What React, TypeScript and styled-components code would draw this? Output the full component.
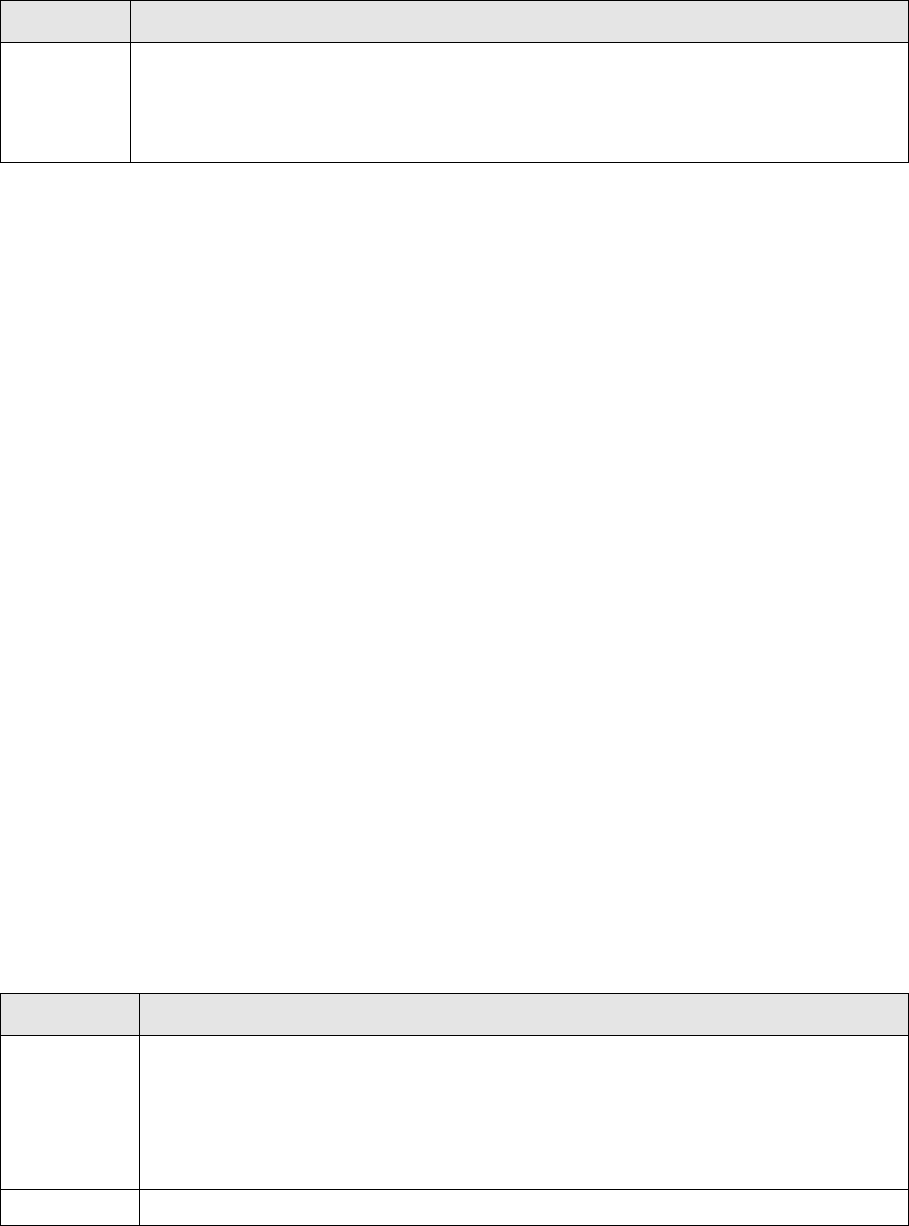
import React from 'react';
import styled, { createGlobalStyle } from 'styled-components';

const GlobalStyle = createGlobalStyle`
  html, body {
    margin: 0;
    padding: 0;
    background: #fff;
    font-family: "Liberation Sans", Arial, sans-serif;
  }
  * { box-sizing: border-box; }
`;

const Page = styled.div`
  width: 909px;
  display: flex;
  flex-direction: column;
`;

const Table = styled.div<{ $first: number; $gapTop?: number }>`
  display: grid;
  grid-template-columns: ${({ $first }) => `${$first}px 1fr`};
  width: 909px;
  border-top: 1px solid #000;
  border-left: 1px solid #000;
  margin-top: ${({ $gapTop }) => ($gapTop ? `${$gapTop}px` : '0')};
`;

const Cell = styled.div<{ $h: number; $head?: boolean }>`
  height: ${({ $h }) => `${$h}px`};
  background: ${({ $head }) => ($head ? '#e5e5e5' : '#fff')};
  border-right: 1px solid #000;
  border-bottom: 1px solid #000;
  font-size: 14px;
  color: #000;
  padding: 8px 10px;
`;

const rowsTop = [42, 120];
const rowsBottom = [42, 154, 36];

export default function App() {
  return (
    <>
      <GlobalStyle />
      <Page>
        <Table $first={130}>
          {rowsTop.map((h, i) => (
            <React.Fragment key={i}>
              <Cell $h={h} $head={i === 0} />
              <Cell $h={h} $head={i === 0} />
            </React.Fragment>
          ))}
        </Table>
        <Table $first={139} $gapTop={830}>
          {rowsBottom.map((h, i) => (
            <React.Fragment key={i}>
              <Cell $h={h} $head={i === 0} />
              <Cell $h={h} $head={i === 0} />
            </React.Fragment>
          ))}
        </Table>
      </Page>
    </>
  );
}
